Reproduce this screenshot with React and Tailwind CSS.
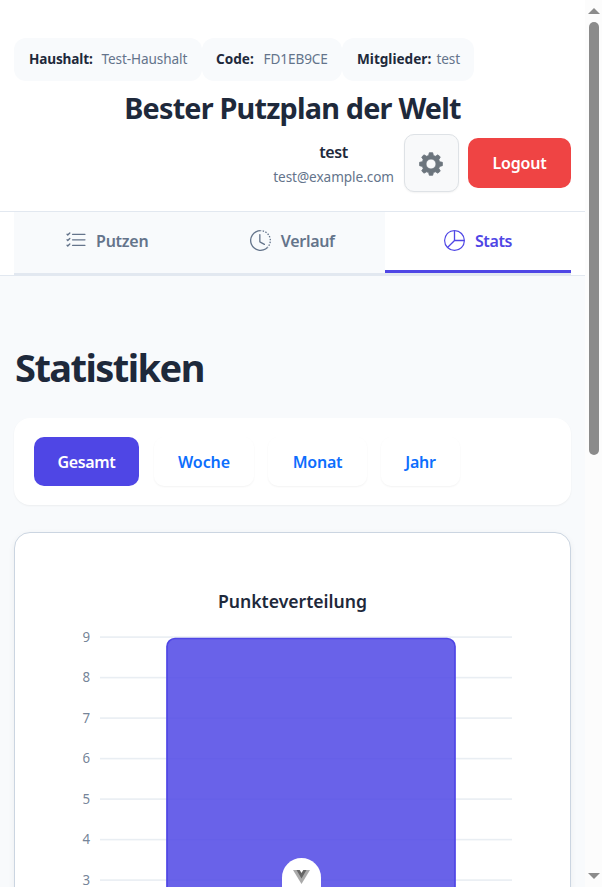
import React from "react";
import { BsListCheck, BsClockHistory, BsPieChart } from "react-icons/bs";

function Badge({ label, value, className }) {
  return (
    <div className={"flex h-[43px] items-center whitespace-nowrap rounded-xl bg-[#f8fafc] text-[13.6px] " + className}>
      {label}
      {value}
    </div>
  );
}

function Gear() {
  return (
    <svg className="-ml-px mt-px h-6 w-6" viewBox="0 0 24 24" fill="#6c757d">
      <path
        fillRule="evenodd"
        stroke="#6c757d"
        strokeWidth="0.8"
        strokeLinejoin="round"
        d="M10.3.7h3.4l.7 2.8 2 .8 2.6-1.5 2.3 2.3-1.5 2.6.8 2 2.8.6v3.4l-2.8.7-.8 2 1.500 2.500-2.300 2.300-2.600-1.400-2 .8-.7 2.700h-3.400l-.7-2.700-2-.8L5 21.200l-2.300-2.300 1.500-2.500-.8-2-2.800-.7v-3.400l2.800-.6.8-2-1.500-2.600L5 2.800l2.600 1.500 2-.8zM12 7a5 5 0 1 0 0 10a5 5 0 0 0 0-10z"
      />
    </svg>
  );
}

function Header() {
  return (
    <header className="flex h-[212px] flex-col border-b border-[#e2e8f0] bg-white pl-[14px] pr-[14px] pt-[38px]">
      <div className="flex">
        <Badge
          className="w-[188px] pl-[15px]"
          label={<span className="w-[72.5px] font-bold tracking-[-0.15px] text-[#1e293b]">Haushalt:</span>}
          value={<span className="tracking-[-0.1px] text-[#64748b]">Test-Haushalt</span>}
        />
        <Badge
          className="w-[140px] pl-[14px]"
          label={<span className="w-[47.5px] font-bold text-[#1e293b]">Code:</span>}
          value={<span className="tracking-[-0.1px] text-[#64748b]">FD1EB9CE</span>}
        />
        <Badge
          className="w-[132px] pl-[15px]"
          label={<span className="w-[79.5px] font-bold text-[#1e293b]">Mitglieder:</span>}
          value={<span className="tracking-[-0.1px] text-[#64748b]">test</span>}
        />
      </div>
      <h1 className="mt-[5px] h-11 whitespace-nowrap text-center text-[28.8px] font-bold leading-[43px] tracking-[-0.8px] text-[#1e293b]">
        Bester Putzplan der Welt
      </h1>
      <div className="mt-1 flex h-[58px] items-center justify-end">
        <div className="mr-[10px] flex flex-col items-center pt-[2px]">
          <span className="text-base font-semibold leading-[26px] tracking-[-0.4px] text-[#1e293b]">test</span>
          <span className="text-[13.6px] leading-6 tracking-[-0.06px] text-[#64748b]">test@example.com</span>
        </div>
        <div className="mr-[9px] flex h-[58px] w-[55px] items-center justify-center rounded-[10px] border border-[#dee2e6] bg-[#f8f9fa] shadow-[0_1px_2px_rgba(0,0,0,0.05)]">
          <Gear />
        </div>
        <div className="flex h-[50px] w-[103px] items-center justify-center rounded-[10px] bg-[#ef4444] text-base font-semibold tracking-[-0.2px] text-white">
          Logout
        </div>
      </div>
    </header>
  );
}

function Tabs() {
  const tab = "flex h-[61px] items-center justify-center text-base font-semibold ";
  return (
    <nav className="h-16 border-b border-[#e2e8f0] bg-white px-[14px]">
      <div className="grid h-16 grid-cols-[185.5px_185.5px_186px] border-b-[3px] border-[#e2e8f0]">
        <div className={tab + "gap-[9px] bg-[#f8fafc] pb-[3px] text-[#64748b]"}>
          <BsListCheck className="mb-[2px] h-[23px] w-[22px]" />
          <span className="tracking-[-0.25px]">Putzen</span>
        </div>
        <div className={tab + "gap-[10px] bg-[#f8fafc] pb-[3px] text-[#64748b]"}>
          <BsClockHistory className="mb-px h-[21px] w-[21px]" />
          <span className="tracking-[-0.3px]">Verlauf</span>
        </div>
        <div className={tab + "gap-[10px] border-b-[3px] border-[#4f46e5] bg-white text-[#4f46e5]"}>
          <BsPieChart className="mb-px h-[21px] w-[21px]" />
          <span className="tracking-[-0.4px]">Stats</span>
        </div>
      </div>
    </nav>
  );
}

function Filters() {
  const base = "flex h-[49px] items-center justify-center rounded-[10px] text-base font-semibold ";
  const idle = "bg-white text-[#0d6efd] shadow-[0_1px_2px_rgba(0,0,0,0.05)] ";
  return (
    <div className="mt-[27px] flex h-[87px] items-center rounded-2xl bg-white pl-5 shadow-[0_1px_2px_rgba(0,0,0,0.05)]">
      <div className={base + "mr-[15px] w-[105px] bg-[#4f46e5] text-white"}><span className="tracking-[-0.35px]">Gesamt</span></div>
      <div className={base + idle + "mr-[14px] w-[100px]"}><span className="tracking-[-0.1px]">Woche</span></div>
      <div className={base + idle + "mr-[14px] w-[99px]"}><span className="tracking-[-0.25px]">Monat</span></div>
      <div className={base + idle + "w-[79px]"}><span className="tracking-[-0.2px]">Jahr</span></div>
    </div>
  );
}

const TICKS = [9, 8, 7, 6, 5, 4, 3];

function Chart() {
  return (
    <div className="mt-[27px] h-[400px] overflow-hidden rounded-2xl border border-[#cbd5e1] bg-white shadow-[0_2px_6px_rgba(0,0,0,0.06)]">
      <svg width="555" height="354" viewBox="15 533 555 354" fontFamily="'Noto Sans', 'Open Sans', sans-serif">
        <text x="292.5" y="607.5" textAnchor="middle" textLength="149" fontSize="17.6" fontWeight="600" fill="#1e293b">
          Punkteverteilung
        </text>
        {TICKS.map((t, i) => (
          <g key={t}>
            <text x="82.5" y={641.5 + i * 40.5} textLength="7.6" lengthAdjust="spacingAndGlyphs" fontSize="14" fill="#64748b" fillOpacity="0.9">{t}</text>
            <rect x="100" y={636.3 + i * 40.5} width="412" height="1.6" fill="#e9eef3" />
          </g>
        ))}
        <path d="M167 890V646.5a8 8 0 0 1 8-8H447a8 8 0 0 1 8 8V890z" fill="#4f46e5" fillOpacity="0.85" />
        <path d="M167 890V646.5a8 8 0 0 1 8-8H447a8 8 0 0 1 8 8V890" fill="none" stroke="#4f46e5" strokeWidth="1.7" />
      </svg>
    </div>
  );
}

function Scrollbar() {
  return (
    <div className="flex h-full w-[17px] flex-col items-center justify-between bg-[#fcfcfc] pb-[8px] pl-px pt-[8px]">
      <div className="flex flex-col items-center">
        <svg width="12" height="6" viewBox="0 0 12 6"><path d="M0 6L6 0l6 6z" fill="#8b8b8b" /></svg>
        <div className="mt-2 h-[433px] w-[10px] rounded-full bg-[#8b8b8b]" />
      </div>
      <svg width="12" height="6" viewBox="0 0 12 6"><path d="M0 0h12L6 6z" fill="#8b8b8b" /></svg>
    </div>
  );
}

export default function App() {
  return (
    <div className="relative flex h-[887px] w-[602px] overflow-hidden bg-[#f8fafc] font-['Noto_Sans','Open_Sans',sans-serif]">
      <div className="h-full w-[585px] overflow-hidden">
        <Header />
        <Tabs />
        <main className="px-[14px] pt-[67px]">
          <h2 className="h-12 pl-px text-[38px] font-bold leading-[48px] tracking-[-1.55px] text-[#1e293b]">Statistiken</h2>
          <Filters />
          <Chart />
        </main>
      </div>
      <Scrollbar />
      <div className="absolute left-[282px] top-[858px] flex h-[60px] w-[39px] justify-center rounded-full bg-white pt-3">
        <svg width="17" height="14" viewBox="0 0 17 14">
          <path d="M0 0h17L8.500 14z" fill="#aaa" />
          <path d="M3.500 0h10L8.500 8.500z" fill="#666" />
          <path d="M6.700 0h3.600L8.500 3z" fill="#fff" />
        </svg>
      </div>
    </div>
  );
}
